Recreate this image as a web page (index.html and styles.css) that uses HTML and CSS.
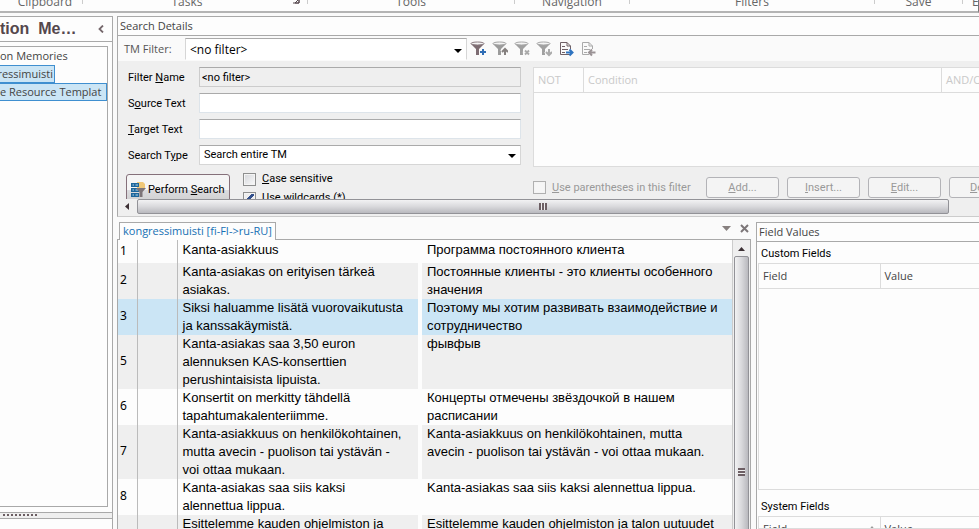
FILE: index.html
```html
<!DOCTYPE html>
<html lang="en">
<head>
<meta charset="utf-8">
<title>Translation Memories</title>
<link rel="stylesheet" href="styles.css">
</head>
<body>
<div class="app">
  <header class="ribbon">
    <span class="group g-clipboard">Clipboard</span>
    <span class="group g-tasks">Tasks
      <svg class="launcher" width="8" height="8" viewBox="0 0 8 8"><path d="M0.500 3V0H3M3 2L6 5M7 1V7H1M7 3V7H3Z" fill="none" stroke="#54474c"/></svg>
    </span>
    <span class="group g-tools">Tools</span>
    <span class="group g-nav">Navigation</span>
    <span class="group g-filters">Filters</span>
    <span class="group g-save">Save</span>
    <span class="group g-last">E</span>
  </header>

  <div class="workspace">
    <aside class="sidebar">
      <div class="side-head">
        <h1>tion&nbsp; Me…</h1>
        <button class="collapse" aria-label="Collapse"><svg width="6" height="8" viewBox="0 0 6 8"><path d="M5 .5L1.500 4L5 7.500" fill="none" stroke="#75686c" stroke-width="1.800"/></svg></button>
      </div>
      <ul class="tree">
        <li><span class="node wide">on Memories</span></li>
        <li><span class="node w-mem selected">gressimuisti</span></li>
        <li><span class="node wide selected">e Resource Templat</span></li>
      </ul>
      <div class="splitter"><i></i></div>
      <div class="side-foot"></div>
    </aside>

    <main class="content">
      <section class="search">
        <h2 class="bar">Search Details</h2>
        <div class="toolbar">
          <label for="tm">TM Filter:</label>
          <div class="combo tm"><select id="tm"><option>&lt;no filter&gt;</option></select></div>
          <button class="tool" aria-label="Add filter"><svg width="16" height="16" viewBox="0 0 16 16"><path d="M1 3L6 8V14H9V8L14 3Z" fill="#7d6c72"/><ellipse cx="7.500" cy="2.500" rx="6.500" ry="1.500" fill="#f4f4f4" stroke="#8b7c82"/><path d="M12 8V14M9 11H15" stroke="#fafafa" stroke-width="4"/><path d="M13 8V14M10 11H16" stroke="#2f6db5" stroke-width="2"/></svg></button>
          <button class="tool" aria-label="Export filter"><svg width="16" height="16" viewBox="0 0 16 16"><path d="M1 3L6 8V14H9V8L14 3Z" fill="#9b9b9b"/><ellipse cx="7.500" cy="2.500" rx="6.500" ry="1.500" fill="#f4f4f4" stroke="#a4a4a4"/><path d="M12 7V14M9.500 10.500L12 8L14.500 10.500" stroke="#fafafa" stroke-width="3.500" fill="none"/><path d="M13 8V14M10 11L13 8L16 11" stroke="#85807f" stroke-width="2" fill="none"/></svg></button>
          <button class="tool" aria-label="Delete filter"><svg width="16" height="16" viewBox="0 0 16 16"><path d="M1 3L6 8V14H9V8L14 3Z" fill="#a0a0a0"/><ellipse cx="7.500" cy="2.500" rx="6.500" ry="1.500" fill="#f4f4f4" stroke="#a8a8a8"/><path d="M10 9.500L14 13.500M14 9.500L10 13.500" stroke="#fafafa" stroke-width="4"/><path d="M11 9.500L15 13.500M15 9.500L11 13.500" stroke="#aaa" stroke-width="1.800"/></svg></button>
          <button class="tool" aria-label="Import filter"><svg width="16" height="16" viewBox="0 0 16 16"><path d="M1 3L6 8V14H9V8L14 3Z" fill="#a0a0a0"/><ellipse cx="7.500" cy="2.500" rx="6.500" ry="1.500" fill="#f4f4f4" stroke="#a8a8a8"/><path d="M12 7V13M9.500 10.500L12 13L14.500 10.500" stroke="#fafafa" stroke-width="3.500" fill="none"/><path d="M13 8V14M10 11L13 14L16 11" stroke="#aaa" stroke-width="2" fill="none"/></svg></button>
          <button class="tool" aria-label="Save to file"><svg width="16" height="16" viewBox="0 0 16 16"><path d="M2.500 1.500H9L12.500 5V8M2.500 1.500V13.500H12.500M9 1.500V5H12.500M4 5.500H7M4 8.500H10M4 11.500H7" fill="none" stroke="#6f6066"/><path d="M8 11.500H14M11.500 8.500L14.500 11.500L11.500 14.500" fill="none" stroke="#2f74c0" stroke-width="2"/></svg></button>
          <button class="tool" aria-label="Load from file"><svg width="16" height="16" viewBox="0 0 16 16"><path d="M2.500 1.500H9L12.500 5V8M2.500 1.500V13.500H9M9 1.500V5H12.500M4 5.500H7M4 8.500H10M4 11.500H7" fill="none" stroke="#aaa"/><path d="M9 11.500H15.500M12 8.500L9 11.500L12 14.500" fill="none" stroke="#9a9295" stroke-width="2"/></svg></button>
        </div>
        <div class="form-view">
          <div class="form">
            <div class="fields">
              <label for="f1">Filter <u>N</u>ame</label><input id="f1" class="ro" value="&lt;no filter&gt;" readonly>
              <label for="f2">S<u>o</u>urce Text</label><input id="f2">
              <label for="f3"><u>T</u>arget Text</label><input id="f3">
              <label for="f4">Search T<u>y</u>pe</label><div class="combo"><select id="f4"><option>Search entire TM</option></select></div>
              <div class="actions">
                <button class="perform"><svg width="16" height="16" viewBox="0 0 16 16"><path d="M7 0H13L15 2V7H7Z" fill="#f0c878"/><path d="M1 1H9V5H1ZM1 6H9V10H1ZM1 11H9V15H1Z" fill="#1d669b"/><path d="M2.500 3H4M5.500 3H8M2.500 8H4M5.500 8H8M2.500 13H4M5.500 13H8" stroke="#b8d8ec"/><path d="M6 6H16L12.500 10V15H9.500V10Z" fill="#7d7478"/></svg><span>Perform <u>S</u>earch</span></button>
                <div class="checks">
                  <label><input type="checkbox"><span><u>C</u>ase sensitive</span></label>
                  <label><input type="checkbox" checked><span>Use <u>w</u>ildcards (*)</span></label>
                </div>
              </div>
            </div>
            <div class="conditions">
              <table class="cond">
                <thead><tr><th class="c-not">NOT</th><th>Condition</th><th class="c-op">AND/OR</th></tr></thead>
              </table>
              <div class="cond-actions">
                <label><input type="checkbox" disabled><span><u>U</u>se parentheses in this filter</span></label>
                <button disabled><span><u>A</u>dd...</span></button>
                <button disabled><span><u>I</u>nsert...</span></button>
                <button disabled><span><u>E</u>dit...</span></button>
                <button disabled><span><u>D</u>elete</span></button>
              </div>
            </div>
          </div>
        </div>
        <div class="hscroll"><svg width="6" height="7" viewBox="0 0 6 7"><path d="M5 0V7L1 3.500Z" fill="#3c3034"/></svg><div class="hthumb"><i></i></div></div>
      </section>

      <div class="lower">
        <section class="editor">
          <div class="tabs">
            <a class="tab" href="#units">kongressimuisti [fi-FI-&gt;ru-RU]</a>
            <button class="tabbtn" aria-label="Tab list"><svg width="9" height="5" viewBox="0 0 9 5"><path d="M0 0H9L4.500 5Z" fill="#87807f"/></svg></button>
            <button class="tabbtn" aria-label="Close"><svg width="9" height="9" viewBox="0 0 9 9"><path d="M1 1L8 8M8 1L1 8" stroke="#7c7678" stroke-width="2"/></svg></button>
          </div>
          <div class="grid" id="units">
            <div class="units-view">
            <table class="units">
              <colgroup><col class="k1"><col class="k2"><col class="k3"><col class="k4"><col></colgroup>
              <tbody>
              <tr class="first"><th>1</th><td class="st"></td><td>Kanta-asiakkuus</td><td class="gap"></td><td>Программа постоянного клиента</td></tr>
              <tr class="alt"><th>2</th><td class="st"></td><td>Kanta-asiakas on erityisen tärkeä asiakas.</td><td class="gap"></td><td>Постоянные клиенты - это клиенты особенного значения</td></tr>
              <tr class="sel"><th>3</th><td class="st"></td><td>Siksi haluamme lisätä vuorovaikutusta ja kanssakäymistä.</td><td class="gap"></td><td>Поэтому мы хотим развивать взаимодействие и сотрудничество</td></tr>
              <tr class="alt"><th>5</th><td class="st"></td><td>Kanta-asiakas saa 3,50 euron alennuksen KAS-konserttien perushintaisista lipuista.</td><td class="gap"></td><td>фывфыв</td></tr>
              <tr><th>6</th><td class="st"></td><td>Konsertit on merkitty tähdellä tapahtumakalenteriimme.</td><td class="gap"></td><td>Концерты отмечены звёздочкой в нашем расписании</td></tr>
              <tr class="alt"><th>7</th><td class="st"></td><td>Kanta-asiakkuus on henkilökohtainen, mutta avecin - puolison tai ystävän -<br>voi ottaa mukaan.</td><td class="gap"></td><td>Kanta-asiakkuus on henkilökohtainen, mutta<br>avecin - puolison tai ystävän - voi ottaa mukaan.</td></tr>
              <tr><th>8</th><td class="st"></td><td>Kanta-asiakas saa siis kaksi<br>alennettua lippua.</td><td class="gap"></td><td>Kanta-asiakas saa siis kaksi alennettua lippua.</td></tr>
              <tr class="alt"><th></th><td class="st"></td><td>Esittelemme kauden ohjelmiston ja</td><td class="gap"></td><td>Esittelemme kauden ohjelmiston ja talon uutuudet</td></tr>
              </tbody>
            </table>
            </div>
            <div class="vscroll"><svg width="7" height="4" viewBox="0 0 7 4"><path d="M0 4H7L3.500 0Z" fill="#3c3034"/></svg><div class="vthumb"><i></i></div></div>
          </div>
        </section>

        <section class="values">
          <h2 class="bar">Field Values</h2>
          <h3>Custom Fields</h3>
          <div class="box grow"><table><thead><tr><th class="c-field">Field</th><th>Value</th></tr></thead></table></div>
          <h3>System Fields</h3>
          <div class="box cut"><table><thead><tr><th class="c-field"><div class="sorted">Field<svg width="8" height="5" viewBox="0 0 8 5"><path d="M0 5H8L4 0Z" fill="#989898"/></svg></div></th><th>Value</th></tr></thead></table></div>
        </section>
      </div>
    </main>
  </div>
</div>
</body>
</html>
```

FILE: styles.css
```css
:root {
  --line: #a9a9a9;
  --soft: #dcdcdc;
  --face: #efefef;
  --ui: "Open Sans", "Noto Sans", sans-serif;
  --form: Roboto, "Liberation Sans", sans-serif;
}
* { box-sizing: border-box; }
body { margin: 0; background: #fafafa; color: #444; font: 11px/16px var(--ui); }
h1, h2, h3, ul { margin: 0; padding: 0; font-weight: normal; }
button { border: 0; padding: 0; background: none; font: inherit; color: inherit; }
table { border-collapse: collapse; border-spacing: 0; }
th { font-weight: normal; text-align: left; }
svg { display: block; flex: none; }

.app { display: flex; flex-direction: column; height: 100vh; overflow: hidden; }

.ribbon { display: flex; flex: none; height: 13px; overflow: hidden; background: #fdfdfd; border-bottom: 2px solid #b4b4b4; border-right: 1px solid #777; }
.group { display: flex; justify-content: center; flex: none; position: relative; height: 12px; margin-top: -8px; border-right: 1px solid #ccc; font-size: 12px; line-height: 20px; color: #666; }
.g-clipboard { width: 83px; padding-left: 8px; }
.g-tasks { width: 225px; padding-right: 16px; }
.g-tools { width: 207px; }
.g-nav { width: 115px; }
.g-filters { width: 245px; }
.g-save { width: 88px; }
.g-last { flex: 1; justify-content: flex-start; padding-left: 9px; border: 0; }
.launcher { position: absolute; right: 7px; top: 4px; }

.workspace { display: flex; flex: 1; min-height: 0; padding-top: 3px; gap: 4px; }

.sidebar { display: flex; flex-direction: column; width: 113px; flex: none; border: 1px solid var(--line); border-left: 0; border-bottom: 0; background: #fdfdfd; }
.side-head { display: flex; align-items: center; justify-content: space-between; height: 25px; flex: none; padding-right: 8px; border-bottom: 1px solid var(--line); }
h1 { font: bold 16px/24px "Liberation Sans", sans-serif; color: #54474c; white-space: nowrap; }
.tree { flex: 1; list-style: none; margin: 4px 4px 0 0; border: 1px solid var(--line); border-left: 0; overflow: hidden; }
.tree li { display: flex; height: 18px; }
.node { display: flex; justify-content: flex-end; align-items: center; height: 18px; overflow: hidden; white-space: nowrap; }
.w-mem { width: 55px; padding-right: 1px; }
.wide { flex: 1; justify-content: flex-start; }
.selected { background: #cbe5f5; border: 1px solid #3f8fd0; border-left: 0; }
.splitter { flex: none; height: 7px; margin-top: 5px; border: 1px solid var(--line); border-width: 1px 0; background: var(--face); padding: 1px 0 0 3px; }
.splitter i { display: block; width: 34px; height: 2px; background: repeating-linear-gradient(90deg, #6b5d62 0 2px, transparent 2px 4px); }
.side-foot { flex: none; height: 10px; }

.content { display: flex; flex-direction: column; flex: 1; min-width: 0; }
.bar { height: 20px; flex: none; border: 1px solid var(--line); border-width: 1px 0; background: #fdfdfd; padding-left: 2px; font-size: 11px; line-height: 17px; }
.search { flex: none; border-left: 1px solid var(--line); border-bottom: 1px solid #ccc; }
.toolbar { display: flex; align-items: center; height: 25px; padding-left: 6px; padding-top: 1px; }
.toolbar label { width: 61px; color: #555; }
.combo { position: relative; height: 20px; background: #fff; border: 1px solid #d6d6d6; border-top-color: #aaa; }
.combo::after { content: ""; position: absolute; right: 4px; top: 8px; border: 4px solid transparent; border-top-color: #000; border-bottom: 0; pointer-events: none; }
.combo select { appearance: none; width: 100%; height: 100%; border: 0; padding: 0 4px; background: none; font: inherit; color: #000; }
.combo.tm { width: 282px; height: 22px; margin-right: 3px; border-bottom-color: #fff; }
.combo.tm select { font-size: 12px; padding-top: 1px; }
.combo.tm::after { top: 10px; }
.tool { width: 16px; height: 16px; margin-right: 6px; }

.form-view { height: 138px; overflow: hidden; background: var(--face); color: #000; font-family: var(--form); font-size: 11px; }
.form { display: grid; grid-template-columns: 393px 489px; gap: 12px; padding: 6px 0 0 10px; }
.fields { display: grid; grid-template-columns: 71px 1fr; gap: 6px 0; align-content: start; align-items: center; }
.fields > label { padding-top: 2px; }
.fields > input { height: 20px; min-width: 0; border: 1px solid #dde4ea; border-top-color: #aaa; background: #fff; padding: 0 2px; font: inherit; }
.fields > input.ro { background: var(--face); border-color: #ccc; border-top-color: #aaa; }
.actions { grid-column: 1 / -1; display: flex; align-items: flex-start; gap: 13px; margin-left: -2px; }
.perform { display: flex; align-items: center; gap: 2px; width: 104px; height: 32px; margin-top: 3px; padding: 0 3px; border: 1px solid #85707a; border-radius: 3px; background: linear-gradient(#f5f5f5 50%, #dcdcdf 50%, #ccc); }
.form label { white-space: nowrap; }
.checks { display: flex; flex-direction: column; gap: 3px; }
.checks label, .cond-actions label { display: flex; align-items: center; gap: 6px; height: 16px; }
input[type="checkbox"] { appearance: none; flex: none; width: 13px; height: 13px; margin: 0; border: 1px solid #8e8f8f; background: linear-gradient(135deg, #d4d6da, #fafafa); box-shadow: inset 0 0 0 1px #f4f4f4; }
input[type="checkbox"]:checked { background: linear-gradient(135deg, transparent 40%, #33508c 40% 55%, transparent 55%), #eee; }
input[type="checkbox"]:disabled { border-color: #b0b0b0; background: #f6f6f6; }

.conditions { min-width: 0; }
.cond { display: block; height: 100px; background: #fdfdfd; border: 1px solid var(--soft); color: #c9c9c9; font: 11px/16px var(--ui); }
.cond thead { display: block; border-bottom: 1px solid var(--soft); }
.cond tr { display: flex; }
.cond th { display: flex; align-items: center; flex: 1; height: 24px; padding: 0 4px; border-right: 1px solid var(--soft); }
.cond .c-not { flex: 0 0 50px; }
.cond .c-op { flex: 0 0 79px; }
.cond-actions { display: flex; align-items: center; gap: 8px; margin-top: 10px; color: #999; }
.cond-actions label { flex: 1; }
.cond-actions button { width: 73px; height: 21px; border: 1px solid #b3b3b7; border-radius: 3px; background: #f4f4f4; }

.hscroll { display: flex; align-items: center; height: 17px; padding: 0 0 2px 6px; background: var(--face); gap: 7px; }
.hthumb { display: grid; place-items: center; width: calc(100% - 43px); height: 15px; border: 1px solid #929297; border-radius: 2px; background: linear-gradient(#f2f2f3, #d9d9dc 50%, #b9b9be); }
.hthumb i { width: 8px; height: 7px; background: repeating-linear-gradient(90deg, #6d5f64 0 2px, #eee 2px 3px); }

.lower { display: flex; flex: 1; min-height: 0; padding-top: 5px; gap: 5px; }
.editor { display: flex; flex-direction: column; flex: 1; min-width: 0; }
.tabs { display: flex; align-items: flex-start; height: 17px; flex: none; padding: 0 1px 0 2px; gap: 6px; }
.tab { height: 18px; padding: 0 3px; margin-right: auto; position: relative; z-index: 1; border: 1px solid var(--line); border-bottom: 0; background: #fdfdfd; color: #1670b4; text-decoration: none; line-height: 16px; }
.tabbtn { display: grid; place-items: center; width: 12px; height: 12px; }
.grid { display: flex; flex: 1; min-height: 0; border: 1px solid var(--line); border-bottom: 0; background: #fdfdfd; }
.units-view { flex: 1; min-width: 0; overflow: hidden; }
.units { width: 100%; table-layout: fixed; color: #000; font: 13px/18px "Liberation Sans", Arial, sans-serif; }
.units tr { height: 36px; background: #fdfdfd; }
.units td { padding: 0 5px; vertical-align: top; }
.units th { padding: 0 2px 2px; font: 12px/16px "Noto Sans", sans-serif; border-right: 1px solid #bbb; }
.units .st { border-right: 1px solid #bbb; }
.units .first { height: 23px; }
.units .first td { padding-top: 1px; }
.units .alt { background: var(--face); }
.units .sel { background: #cbe5f5; }
.units .gap { background: #fdfdfd; padding: 0; }
.k1 { width: 19px; }
.k2 { width: 40px; }
.k3 { width: 241px; }
.k4 { width: 4px; }
.vscroll { display: flex; flex-direction: column; align-items: center; gap: 5px; width: 18px; padding: 7px 1px 0; border-left: 1px solid #ccc; background: var(--face); }
.vthumb { display: grid; place-items: center; width: 15px; height: 432px; flex: none; border: 1px solid #929297; border-radius: 2px; background: linear-gradient(90deg, #f2f2f3, #d9d9dc 50%, #b9b9be); }
.vthumb i { width: 7px; height: 8px; background: repeating-linear-gradient(#6d5f64 0 2px, #eee 2px 3px); }

.values { display: flex; flex-direction: column; width: 223px; flex: none; border-left: 1px solid var(--line); background: #fdfdfd; }
.values h3 { height: 21px; flex: none; padding: 1px 0 0 4px; font: 11px/22px var(--form); color: #000; }
.box { border: 1px solid var(--soft); border-right: 0; margin-left: 1px; }
.box.grow { flex: 1; margin-bottom: 5px; }
.box.cut { height: 13px; flex: none; overflow: hidden; }
.box table { width: 100%; border-bottom: 1px solid var(--soft); table-layout: fixed; }
.box th { height: 24px; padding: 0 4px; }
.box .c-field { width: 121px; border-right: 1px solid var(--soft); }
.sorted { display: flex; align-items: center; justify-content: space-between; }
```
